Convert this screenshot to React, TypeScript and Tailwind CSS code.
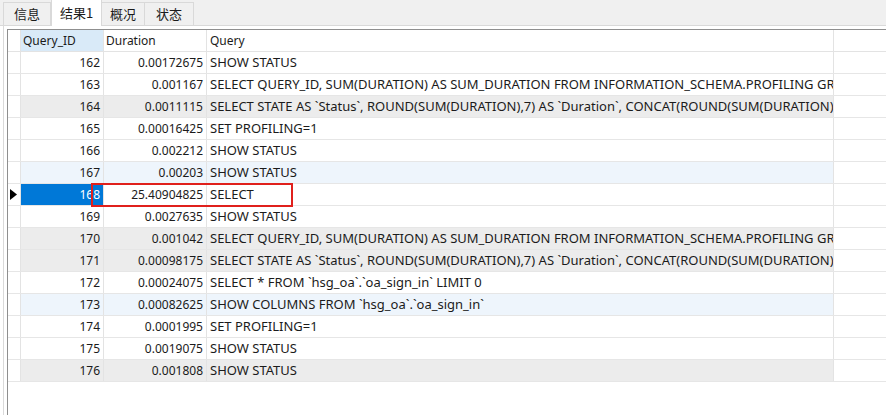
import React from 'react';

type Row = { id: number; duration: string; query: string; tone?: 'grey' | 'blue' };

const rows: Row[] = [
  { id: 162, duration: '0.00172675', query: 'SHOW STATUS' },
  { id: 163, duration: '0.001167', query: 'SELECT QUERY_ID, SUM(DURATION) AS SUM_DURATION FROM INFORMATION_SCHEMA.PROFILING GROUP BY QUERY_ID' },
  { id: 164, duration: '0.0011115', query: 'SELECT STATE AS `Status`, ROUND(SUM(DURATION),7) AS `Duration`, CONCAT(ROUND(SUM(DURATION)/0.000001*100,3), \'%\')', tone: 'grey' },
  { id: 165, duration: '0.00016425', query: 'SET PROFILING=1' },
  { id: 166, duration: '0.002212', query: 'SHOW STATUS' },
  { id: 167, duration: '0.00203', query: 'SHOW STATUS', tone: 'blue' },
  { id: 168, duration: '25.40904825', query: 'SELECT' },
  { id: 169, duration: '0.0027635', query: 'SHOW STATUS' },
  { id: 170, duration: '0.001042', query: 'SELECT QUERY_ID, SUM(DURATION) AS SUM_DURATION FROM INFORMATION_SCHEMA.PROFILING GROUP BY QUERY_ID', tone: 'grey' },
  { id: 171, duration: '0.00098175', query: 'SELECT STATE AS `Status`, ROUND(SUM(DURATION),7) AS `Duration`, CONCAT(ROUND(SUM(DURATION)/0.000001*100,3), \'%\')', tone: 'grey' },
  { id: 172, duration: '0.00024075', query: 'SELECT * FROM `hsg_oa`.`oa_sign_in` LIMIT 0' },
  { id: 173, duration: '0.00082625', query: 'SHOW COLUMNS FROM `hsg_oa`.`oa_sign_in`', tone: 'blue' },
  { id: 174, duration: '0.0001995', query: 'SET PROFILING=1' },
  { id: 175, duration: '0.0019075', query: 'SHOW STATUS' },
  { id: 176, duration: '0.001808', query: 'SHOW STATUS', tone: 'grey' },
];

const tabs = ['信息', '结果1', '概况', '状态'];

export default function App() {
  return (
    <div className="relative h-[415px] w-[886px] overflow-hidden bg-white font-['Noto_Sans','Noto_Sans_CJK_SC',sans-serif] text-[12px] text-[#1b1b1b]">
      {/* tab strip */}
      <div className="flex h-[26px] items-end border-b border-[#d9d9d9] bg-[#f0f0f0] pl-[3px]">
        {tabs.map((t, i) =>
          i === 1 ? (
            <div
              key={t}
              className="-mb-px flex h-[27px] w-[51px] items-center justify-center border border-b-0 border-[#d9d9d9] bg-white font-['Noto_Sans_CJK_SC',sans-serif] text-[13px]"
            >
              {t}
            </div>
          ) : (
            <div
              key={t}
              className={
                'flex h-[23px] items-center justify-center border border-b-0 border-[#d9d9d9] bg-[#f0f0f0] font-[\'Noto_Sans_CJK_SC\',sans-serif] text-[13px] ' +
                (i === 0 ? 'w-[48px]' : i === 2 ? 'w-[43px] border-l-0' : 'w-[49px] border-l-0')
              }
            >
              {t}
            </div>
          )
        )}
      </div>

      {/* grid panel */}
      <div className="ml-[3px] h-[389px] border-l border-[#dadada] pl-[3px] pt-[3px]">
        <div className="h-full border-l border-t border-[#8f8f8f]">
          <div className="flex h-[22px] border-b border-[#e3e3e3]">
            <div className="w-[13px] shrink-0 border-r border-[#e3e3e3]" />
            <div className="flex w-[83px] shrink-0 items-center border-r border-[#e3e3e3] bg-[#d9eaf8] pl-[2px]">Query_ID</div>
            <div className="flex w-[103px] shrink-0 items-center border-r border-[#e3e3e3] pl-[2px]">Duration</div>
            <div className="flex w-[627px] shrink-0 items-center border-r border-[#e3e3e3] pl-[3px]">Query</div>
          </div>
          {rows.map((r) => {
            const selected = r.id === 168;
            const bg = r.tone === 'grey' ? 'bg-[#ececec]' : r.tone === 'blue' ? 'bg-[#eef5fc]' : 'bg-white';
            return (
              <div key={r.id} className="flex h-[22px] border-b border-[#e6e6e6]">
                <div className="flex w-[13px] shrink-0 items-center border-r border-[#e3e3e3] bg-white pl-[2px]">
                  {selected && (
                    <svg width="7" height="11" viewBox="0 0 7 11">
                      <path d="M0 0 L7 5.5 L0 11 Z" fill="#000" />
                    </svg>
                  )}
                </div>
                <div
                  className={
                    'flex w-[83px] shrink-0 items-center justify-end border-r border-[#e3e3e3] pr-[3px] ' +
                    (selected ? 'bg-[#0078d7] text-white' : bg)
                  }
                >
                  {r.id}
                </div>
                <div className={'flex w-[103px] shrink-0 items-center justify-end border-r border-[#e3e3e3] pr-[3px] ' + bg}>
                  {r.duration}
                </div>
                <div className={'flex w-[627px] shrink-0 items-center overflow-hidden whitespace-nowrap border-r border-[#e3e3e3] pl-[3px] text-[13px] ' + bg}>
                  {r.query}
                </div>
              </div>
            );
          })}
        </div>
      </div>

      {/* highlight box */}
      <div className="absolute left-[91px] top-[183px] h-[24px] w-[202px] border-2 border-[#e0201c]" />
    </div>
  );
}
